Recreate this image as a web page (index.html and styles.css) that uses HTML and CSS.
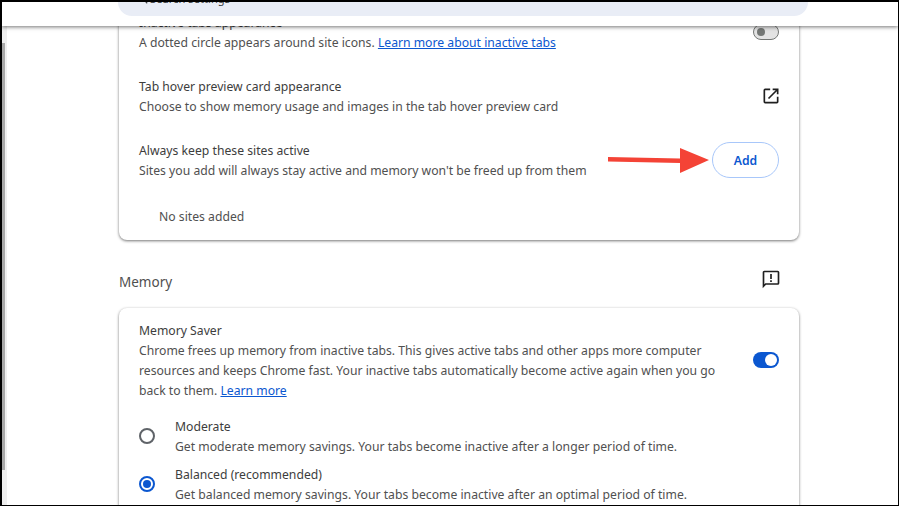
FILE: index.html
```html
<!DOCTYPE html>
<html lang="en">
<head>
<meta charset="utf-8">
<title>Settings - Performance</title>
<link rel="stylesheet" href="styles.css">
</head>
<body>
<div class="frame">
  <header class="topbar">
    <div class="search"><span class="search-text"><svg class="search-icon" viewBox="0 0 12 12"><circle cx="5" cy="5" r="3.5"/><path d="M8 8l3 3"/></svg>Search settings</span></div>
  </header>
  <div class="viewport">
    <div class="rail"><div class="thumb"></div></div>
    <main class="content">
      <section class="card card-first">
        <div class="row">
          <div class="text">
            <div class="title">Inactive tabs appearance</div>
            <div class="sub">A dotted circle appears around site icons. <a href="#">Learn more about inactive tabs</a></div>
          </div>
          <span class="toggle toggle-off"></span>
        </div>
        <div class="row">
          <div class="text">
            <div class="title">Tab hover preview card appearance</div>
            <div class="sub">Choose to show memory usage and images in the tab hover preview card</div>
          </div>
          <svg class="icon icon-launch" viewBox="0 0 24 24"><path d="M5 3h6v2H5v14h14v-6h2v6a2 2 0 0 1-2 2H5a2 2 0 0 1-2-2V5a2 2 0 0 1 2-2zm9 0h7v7h-2V6.400l-9.300 9.300-1.400-1.400L17.600 5H14V3z"/></svg>
        </div>
        <div class="row">
          <div class="text">
            <div class="title">Always keep these sites active</div>
            <div class="sub">Sites you add will always stay active and memory won't be freed up from them</div>
          </div>
          <button class="add">Add</button>
        </div>
        <div class="empty">No sites added</div>
      </section>
      <div class="section-head">
        <h2>Memory</h2>
        <svg class="icon icon-feedback" viewBox="0 0 24 24"><path d="M2 4a2 2 0 0 1 2-2h16a2 2 0 0 1 2 2v13a2 2 0 0 1-2 2H6l-4 4V4zm2 0v14.200L5.200 17H20V4H4zm7 2h2v6h-2V6zm0 7.500h2v2h-2v-2z"/></svg>
      </div>
      <section class="card">
        <div class="saver">
          <div class="text">
            <div class="title">Memory Saver</div>
            <div class="sub">Chrome frees up memory from inactive tabs. This gives active tabs and other apps more computer resources and keeps Chrome fast. Your inactive tabs automatically become active again when you go back to them. <a href="#">Learn more</a></div>
          </div>
          <span class="toggle toggle-on"></span>
        </div>
        <div class="option">
          <span class="radio"></span>
          <div class="text">
            <div class="title">Moderate</div>
            <div class="sub">Get moderate memory savings. Your tabs become inactive after a longer period of time.</div>
          </div>
        </div>
        <div class="option">
          <span class="radio radio-on"></span>
          <div class="text">
            <div class="title">Balanced (recommended)</div>
            <div class="sub">Get balanced memory savings. Your tabs become inactive after an optimal period of time.</div>
          </div>
        </div>
      </section>
    </main>
  </div>
  <svg class="arrow" viewBox="0 0 110 30"><path d="M0 14L72 15.500V5L101 17L72 30V20L0 18.500z"/></svg>
</div>
</body>
</html>
```
FILE: styles.css
```css
* { box-sizing: border-box; }
html, body { margin: 0; height: 100%; }
body { background: #000; overflow: hidden; font-family: "Noto Sans", "Open Sans", "Liberation Sans", sans-serif; }
.frame { position: relative; width: 899px; height: 506px; padding: 2px 1px 1px 2px; overflow: hidden; background: #000; }
.topbar { position: relative; z-index: 2; height: 24px; background: #fff; box-shadow: 0 1px 4px rgba(0,0,0,.55); overflow: hidden; }
.search { position: relative; width: 690px; height: 14px; margin-left: 116px; background: #e9edf6; border-radius: 0 0 16px 16px; overflow: hidden; }
.search-text { position: absolute; left: 21px; top: -11px; display: flex; align-items: center; gap: 2px; font-size: 11.200px; line-height: 16px; color: #3c4043; }
.search-icon { width: 9px; height: 9px; fill: none; stroke: #3c4043; stroke-width: 1.500; }
.viewport { display: flex; height: 479px; overflow: hidden; background: #fff; }
.rail { flex: none; width: 5px; background: #efefef; }
.thumb { width: 3px; height: 427px; margin-top: 17px; background: #a9a9a9; }
.content { flex: none; width: 680px; margin: -26px 0 0 112px; }
.card { background: #fff; border-radius: 8px; box-shadow: 0 1px 3px rgba(0,0,0,.55); padding: 0 20px; }
.card-first { padding-top: 12px; padding-bottom: 4px; }
.row { display: flex; align-items: center; justify-content: space-between; height: 40px; margin-bottom: 24px; }
.row:nth-child(3) { margin-bottom: 16px; }
.row .text { padding-top: 2px; }
.text { min-width: 0; }
.title, .sub, .empty { font-size: 12.200px; line-height: 20px; color: #505050; }
.title { color: #3d3d3d; }
.sub a { color: #0b57d0; }
.empty { padding-left: 20px; height: 40px; line-height: 42px; }
.icon { width: 20px; height: 20px; fill: #1f1f1f; flex: none; }
.icon-launch { margin-right: -2px; }
.icon-feedback { margin-bottom: 6px; }
.toggle { position: relative; flex: none; display: block; width: 26px; height: 16px; border-radius: 8px; }
.toggle::after { content: ""; position: absolute; border-radius: 50%; }
.toggle-off { background: #e3e3e3; border: 1px solid #747775; }
.toggle-off::after { left: 3px; top: 3px; width: 8px; height: 8px; background: #747775; }
.toggle-on { background: #0b57d0; }
.toggle-on::after { left: 12px; top: 2px; width: 12px; height: 12px; background: #fff; }
.add { width: 67px; height: 36px; border-radius: 18px; border: 1px solid #a8c7fa; background: #fff; color: #0b57d0; font: 600 12.200px "Noto Sans", sans-serif; padding: 0; }
.section-head { display: flex; align-items: center; justify-content: space-between; height: 68px; padding: 16px 18px 0 0; }
h2 { margin: 0; font-size: 13.500px; font-weight: 400; color: #505050; }
.saver { display: flex; align-items: center; gap: 24px; padding: 13px 0 15px; }
.saver .toggle { margin-top: -2px; }
.saver .text { flex: 1; }
.option { display: flex; align-items: flex-start; height: 48px; }
.option .text { padding-top: 1px; }
.radio { flex: none; width: 16px; height: 16px; margin: 12px 20px 0 0; border-radius: 50%; border: 2px solid #5f6368; }
.radio-on { position: relative; border-color: #0b57d0; }
.radio-on::after { content: ""; position: absolute; inset: 2px; border-radius: 50%; background: #0b57d0; }
.arrow { position: absolute; left: 608px; top: 143px; width: 110px; height: 30px; fill: #f44336; }
```
